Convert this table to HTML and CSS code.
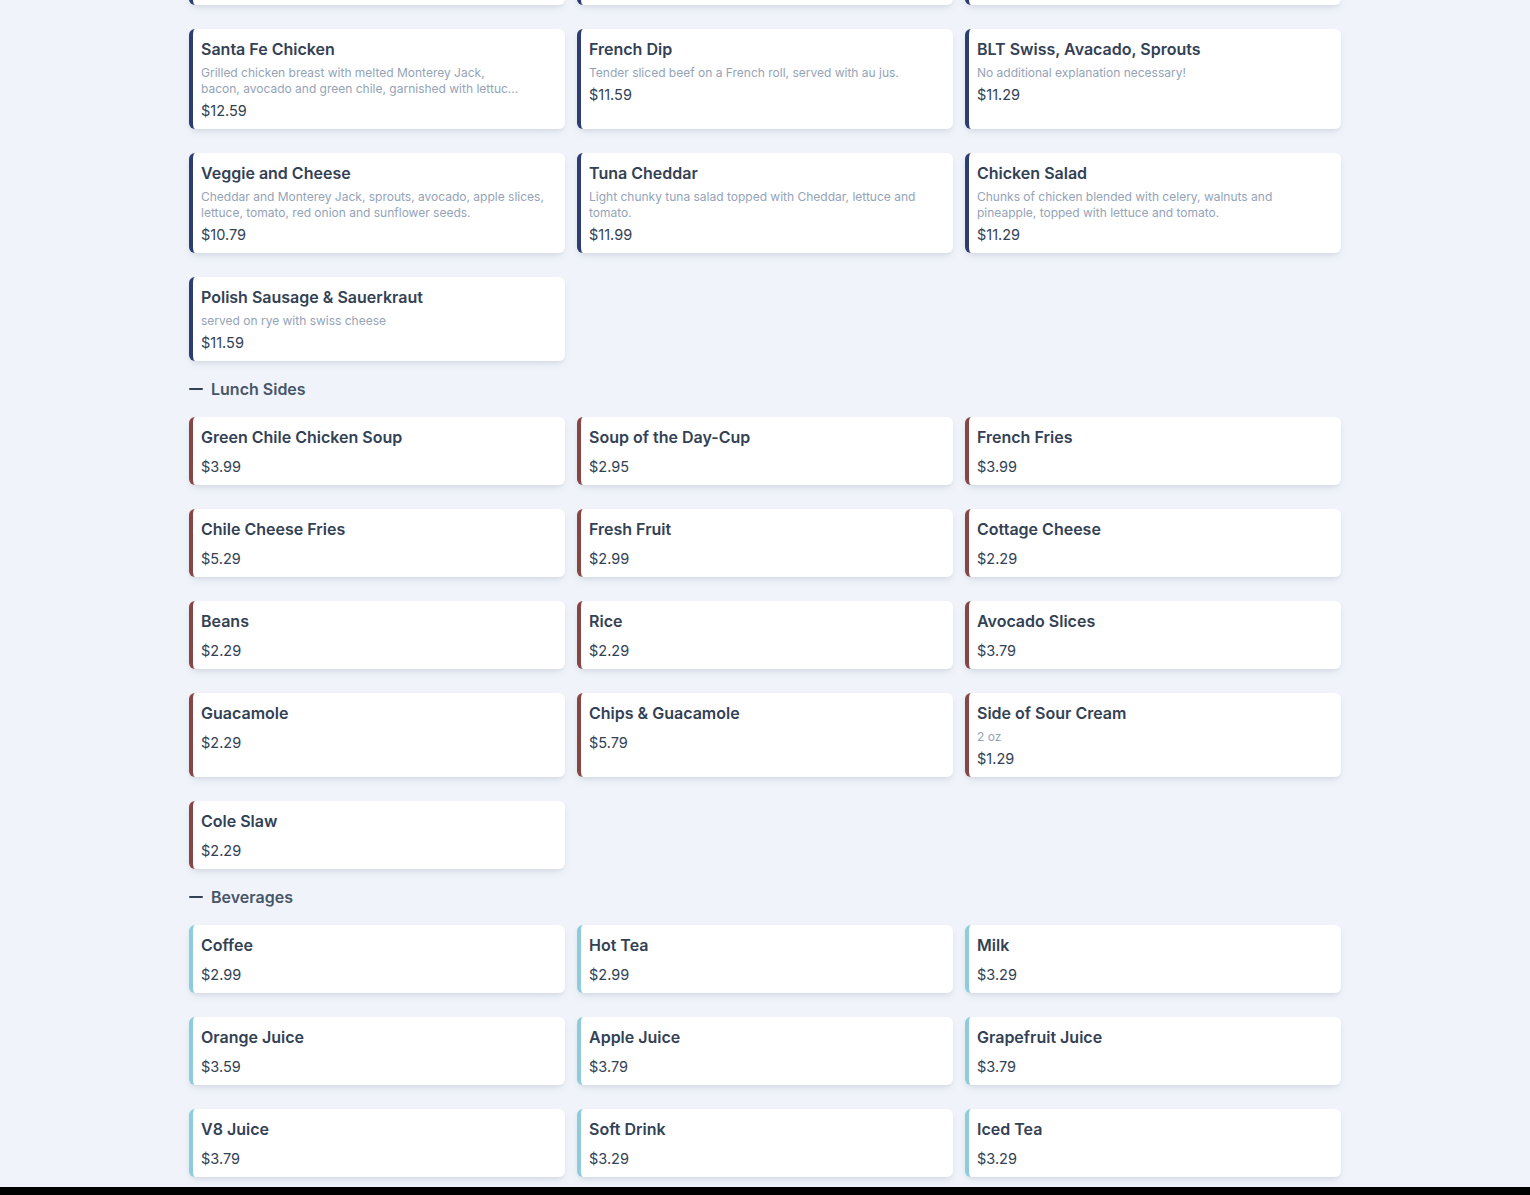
FILE: index.html
```html
<!DOCTYPE html>
<html lang="en">
<head>
  <meta charset="UTF-8">
  <meta name="viewport" content="width=device-width, initial-scale=1.0">
  <title>Menu</title>
  <link rel="stylesheet" href="styles.css">
</head>
<body>
  <main class="menu">
    <section class="category sandwiches">
      <div class="items">
        <div class="item">
          <div class="item-name">Club Sandwich</div>
          <div class="item-desc">Turkey, ham, bacon, Swiss and Cheddar with lettuce and tomato on toasted bread.</div>
          <div class="item-price">$12.59</div>
        </div>
        <div class="item">
          <div class="item-name">Reuben</div>
          <div class="item-desc">Corned beef, sauerkraut and Swiss cheese on grilled rye with Thousand Island.</div>
          <div class="item-price">$12.29</div>
        </div>
        <div class="item">
          <div class="item-name">Grilled Cheese</div>
          <div class="item-desc">American and Cheddar cheese grilled on sourdough bread.</div>
          <div class="item-price">$8.99</div>
        </div>

        <div class="item">
          <div class="item-name">Santa Fe Chicken</div>
          <div class="item-desc">Grilled chicken breast with melted Monterey Jack,<br>bacon, avocado and green chile, garnished with lettuc...</div>
          <div class="item-price">$12.59</div>
        </div>
        <div class="item">
          <div class="item-name">French Dip</div>
          <div class="item-desc">Tender sliced beef on a French roll, served with au jus.</div>
          <div class="item-price">$11.59</div>
        </div>
        <div class="item">
          <div class="item-name">BLT Swiss, Avacado, Sprouts</div>
          <div class="item-desc">No additional explanation necessary!</div>
          <div class="item-price">$11.29</div>
        </div>

        <div class="item">
          <div class="item-name">Veggie and Cheese</div>
          <div class="item-desc">Cheddar and Monterey Jack, sprouts, avocado, apple slices, lettuce, tomato, red onion and sunflower seeds.</div>
          <div class="item-price">$10.79</div>
        </div>
        <div class="item">
          <div class="item-name">Tuna Cheddar</div>
          <div class="item-desc">Light chunky tuna salad topped with Cheddar, lettuce and tomato.</div>
          <div class="item-price">$11.99</div>
        </div>
        <div class="item">
          <div class="item-name">Chicken Salad</div>
          <div class="item-desc">Chunks of chicken blended with celery, walnuts and pineapple, topped with lettuce and tomato.</div>
          <div class="item-price">$11.29</div>
        </div>

        <div class="item">
          <div class="item-name">Polish Sausage &amp; Sauerkraut</div>
          <div class="item-desc">served on rye with swiss cheese</div>
          <div class="item-price">$11.59</div>
        </div>
      </div>
    </section>

    <section class="category sides">
      <h2 class="category-title">
        <svg class="toggle" width="14" height="14" viewBox="0 0 14 14"><path d="M1 7h12" stroke="currentColor" stroke-width="2" stroke-linecap="round"/></svg>
        Lunch Sides
      </h2>
      <div class="items">
        <div class="item">
          <div class="item-name">Green Chile Chicken Soup</div>
          <div class="item-price">$3.99</div>
        </div>
        <div class="item">
          <div class="item-name">Soup of the Day-Cup</div>
          <div class="item-price">$2.95</div>
        </div>
        <div class="item">
          <div class="item-name">French Fries</div>
          <div class="item-price">$3.99</div>
        </div>
        <div class="item">
          <div class="item-name">Chile Cheese Fries</div>
          <div class="item-price">$5.29</div>
        </div>
        <div class="item">
          <div class="item-name">Fresh Fruit</div>
          <div class="item-price">$2.99</div>
        </div>
        <div class="item">
          <div class="item-name">Cottage Cheese</div>
          <div class="item-price">$2.29</div>
        </div>
        <div class="item">
          <div class="item-name">Beans</div>
          <div class="item-price">$2.29</div>
        </div>
        <div class="item">
          <div class="item-name">Rice</div>
          <div class="item-price">$2.29</div>
        </div>
        <div class="item">
          <div class="item-name">Avocado Slices</div>
          <div class="item-price">$3.79</div>
        </div>
        <div class="item">
          <div class="item-name">Guacamole</div>
          <div class="item-price">$2.29</div>
        </div>
        <div class="item">
          <div class="item-name">Chips &amp; Guacamole</div>
          <div class="item-price">$5.79</div>
        </div>
        <div class="item">
          <div class="item-name">Side of Sour Cream</div>
          <div class="item-desc">2 oz</div>
          <div class="item-price">$1.29</div>
        </div>
        <div class="item">
          <div class="item-name">Cole Slaw</div>
          <div class="item-price">$2.29</div>
        </div>
      </div>
    </section>

    <section class="category beverages">
      <h2 class="category-title">
        <svg class="toggle" width="14" height="14" viewBox="0 0 14 14"><path d="M1 7h12" stroke="currentColor" stroke-width="2" stroke-linecap="round"/></svg>
        Beverages
      </h2>
      <div class="items">
        <div class="item">
          <div class="item-name">Coffee</div>
          <div class="item-price">$2.99</div>
        </div>
        <div class="item">
          <div class="item-name">Hot Tea</div>
          <div class="item-price">$2.99</div>
        </div>
        <div class="item">
          <div class="item-name">Milk</div>
          <div class="item-price">$3.29</div>
        </div>
        <div class="item">
          <div class="item-name">Orange Juice</div>
          <div class="item-price">$3.59</div>
        </div>
        <div class="item">
          <div class="item-name">Apple Juice</div>
          <div class="item-price">$3.79</div>
        </div>
        <div class="item">
          <div class="item-name">Grapefruit Juice</div>
          <div class="item-price">$3.79</div>
        </div>
        <div class="item">
          <div class="item-name">V8 Juice</div>
          <div class="item-price">$3.79</div>
        </div>
        <div class="item">
          <div class="item-name">Soft Drink</div>
          <div class="item-price">$3.29</div>
        </div>
        <div class="item">
          <div class="item-name">Iced Tea</div>
          <div class="item-price">$3.29</div>
        </div>
      </div>
    </section>
  </main>
  <div class="bottom-bar"></div>
</body>
</html>
```

FILE: styles.css
```css
body {
  font-family: 'Inter', 'Noto Sans', sans-serif;
  background: #f0f4fa;
  color: #334155;
  margin: 0;
}
.menu {
  max-width: 1152px;
  margin: -95px auto 0;
  padding-bottom: 40px;
}
.items {
  display: grid;
  grid-template-columns: repeat(3, 1fr);
  column-gap: 12px;
  row-gap: 24px;
}
.category-title {
  display: flex;
  align-items: center;
  gap: 8px;
  font-size: 16px;
  line-height: 24px;
  font-weight: 600;
  color: #475569;
  margin: 16px 0;
}
.toggle {
  color: #334155;
}
.item {
  background: white;
  border-left: 4px solid #2b3d73;
  border-radius: 6px;
  padding: 8px 12px 8px 8px;
  box-shadow: 0 4px 8px -2px rgba(30, 41, 80, 0.12), 0 2px 4px -2px rgba(30, 41, 80, 0.08);
}
.sides .item {
  border-left-color: #874643;
}
.beverages .item {
  border-left-color: #8ecbdd;
}
.item-name {
  font-size: 16px;
  line-height: 24px;
  font-weight: 600;
  color: #334155;
  margin-bottom: 4px;
}
.item-desc {
  font-size: 12px;
  line-height: 16px;
  color: #94a3b8;
}
.item-price {
  font-size: 14.5px;
  line-height: 20px;
  color: #334155;
  margin-top: 4px;
}
.item-name + .item-price {
  margin-top: 8px;
}
.bottom-bar {
  position: fixed;
  left: 0;
  right: 0;
  bottom: 0;
  height: 8px;
  background: #000;
}
```
